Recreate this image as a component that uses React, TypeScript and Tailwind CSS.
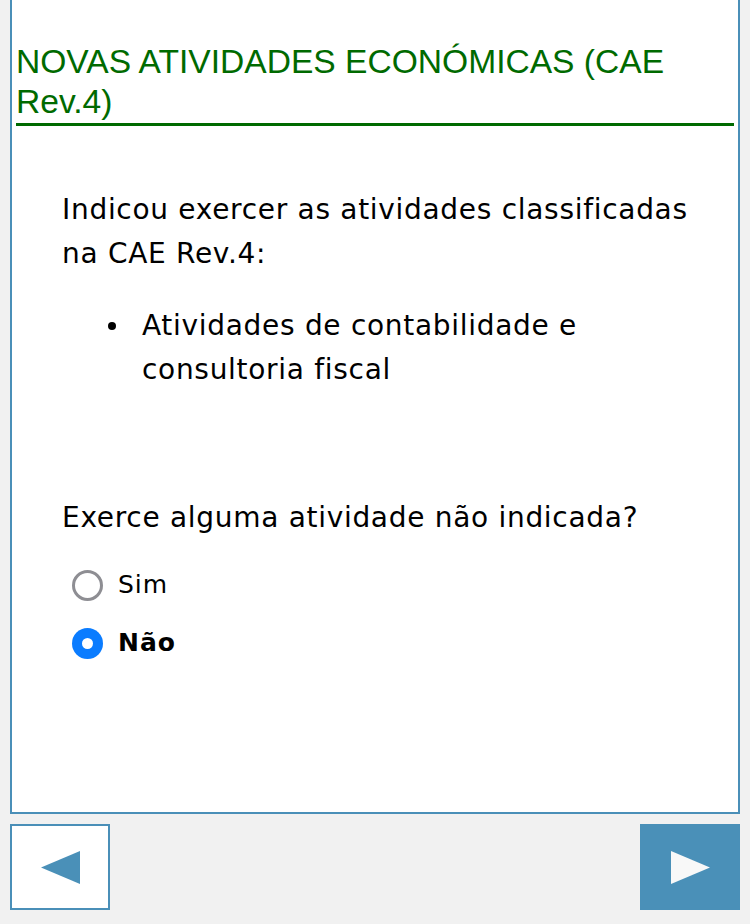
export default function App() {
  return (
    <div className="min-h-[924px] bg-[#f1f1f1] px-[10px] font-['DejaVu_Sans',sans-serif] text-black">
      <div className="h-[814px] border-x-2 border-b-2 border-[#4a8fb8] bg-white px-[4px] pt-[42px]">
        <h1 className="border-b-[3px] border-[#006a00] pb-[1px] font-['Liberation_Sans',Arial,sans-serif] text-[33.6px] leading-[40px] text-[#006a00]">
          NOVAS ATIVIDADES ECONÓMICAS (CAE Rev.4)
        </h1>
        <div className="pl-[46px] pr-[30px] pt-[62px] text-[28px] leading-[44px] tracking-[0.7px]">
          <p>Indicou exercer as atividades classificadas na CAE Rev.4:</p>
          <ul className="mt-[28px] pl-[46px]">
            <li className="flex">
              <span className="flex h-[44px] w-[34px] shrink-0 items-center">
                <span className="h-[8px] w-[8px] rounded-full bg-black" />
              </span>
              <span>Atividades de contabilidade e consultoria fiscal</span>
            </li>
          </ul>
          <p className="mt-[104px]">Exerce alguma atividade não indicada?</p>
          <div className="ml-[10px] mt-[23px] flex flex-col gap-[14px]">
            <label className="flex items-center gap-[15px]">
              <span className="h-[31px] w-[31px] rounded-full border-[3px] border-[#8e8e93] bg-white" />
              <span className="text-[25px] tracking-[1px]">Sim</span>
            </label>
            <label className="flex items-center gap-[15px]">
              <span className="flex h-[31px] w-[31px] items-center justify-center rounded-full bg-[#0a7cff]">
                <span className="h-[11px] w-[11px] rounded-full bg-white" />
              </span>
              <span className="text-[25px] font-bold tracking-[1px]">Não</span>
            </label>
          </div>
        </div>
      </div>
      <div className="mt-[10px] flex justify-between">
        <button className="flex h-[86px] w-[100px] items-center justify-center border-2 border-[#4a8fb8] bg-white">
          <svg width="39" height="33" viewBox="0 0 39 33">
            <path d="M39 0 L0 16.5 L39 33 Z" fill="#4a90b8" />
          </svg>
        </button>
        <button className="flex h-[86px] w-[100px] items-center justify-center bg-[#4a90b8]">
          <svg width="39" height="33" viewBox="0 0 39 33">
            <path d="M0 0 L39 16.5 L0 33 Z" fill="#f8f8f8" />
          </svg>
        </button>
      </div>
    </div>
  );
}
